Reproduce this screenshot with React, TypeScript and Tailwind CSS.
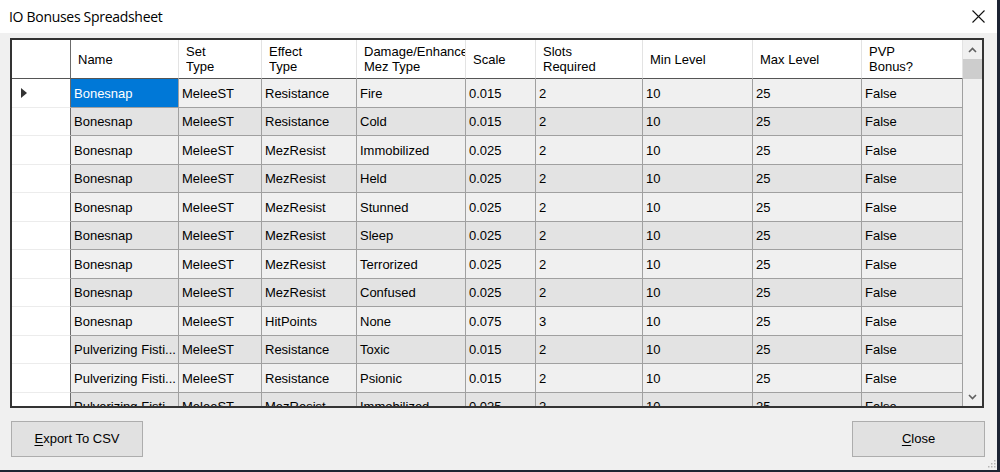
import React from "react"

type Row = [string, string, string, string, string, string, string, string, string]

const rows: Row[] = [
  ["Bonesnap", "MeleeST", "Resistance", "Fire", "0.015", "2", "10", "25", "False"],
  ["Bonesnap", "MeleeST", "Resistance", "Cold", "0.015", "2", "10", "25", "False"],
  ["Bonesnap", "MeleeST", "MezResist", "Immobilized", "0.025", "2", "10", "25", "False"],
  ["Bonesnap", "MeleeST", "MezResist", "Held", "0.025", "2", "10", "25", "False"],
  ["Bonesnap", "MeleeST", "MezResist", "Stunned", "0.025", "2", "10", "25", "False"],
  ["Bonesnap", "MeleeST", "MezResist", "Sleep", "0.025", "2", "10", "25", "False"],
  ["Bonesnap", "MeleeST", "MezResist", "Terrorized", "0.025", "2", "10", "25", "False"],
  ["Bonesnap", "MeleeST", "MezResist", "Confused", "0.025", "2", "10", "25", "False"],
  ["Bonesnap", "MeleeST", "HitPoints", "None", "0.075", "3", "10", "25", "False"],
  ["Pulverizing Fisti...", "MeleeST", "Resistance", "Toxic", "0.015", "2", "10", "25", "False"],
  ["Pulverizing Fisti...", "MeleeST", "Resistance", "Psionic", "0.015", "2", "10", "25", "False"],
  ["Pulverizing Fisti...", "MeleeST", "MezResist", "Immobilized", "0.025", "2", "10", "25", "False"],
]

const headers: string[][] = [
  ["Name"],
  ["Set", "Type"],
  ["Effect", "Type"],
  ["Damage/Enhancement", "Mez Type"],
  ["Scale"],
  ["Slots", "Required"],
  ["Min Level"],
  ["Max Level"],
  ["PVP", "Bonus?"],
]

const cols = "grid grid-cols-[59px_108px_83px_95px_109px_70px_107px_110px_109px_101px]"

function Chevron({ down }: { down?: boolean }) {
  return (
    <svg width="9" height="6" viewBox="0 0 9 6" className={down ? "rotate-180" : ""}>
      <path d="M1 5 L4.5 1.5 L8 5" fill="none" stroke="#606060" strokeWidth="1.6" />
    </svg>
  )
}

export default function App() {
  return (
    <div className="w-[1000px] h-[472px] bg-[#1c2333] overflow-hidden font-['Liberation_Sans',Arial,sans-serif]">
      <div className="w-[997px] h-[470px] bg-[#f0f0f0] flex flex-col relative">
        {/* title bar */}
        <div className="h-[33px] bg-white flex items-center justify-between pl-[9px] pr-[12px]">
          <span className="text-[14px] text-black font-['Open_Sans','Noto_Sans',sans-serif] tracking-[-0.3px]">
            IO Bonuses Spreadsheet
          </span>
          <svg width="13" height="13" viewBox="0 0 13 13">
            <path d="M0.5 0.5 L12.5 12.5 M12.5 0.5 L0.5 12.5" stroke="#111" strokeWidth="1.1" />
          </svg>
        </div>

        {/* grid */}
        <div className="ml-[10px] mt-[5px] w-[974px] h-[370px] border-2 border-[#333] flex bg-white">
          <div className="flex-1 overflow-hidden text-[13px] text-black">
            <div className={`${cols} h-[39px] bg-white`}>
              <div className="border-r border-b border-r-[#6b6b6b] border-b-[#555]" />
              {headers.map((h, i) => (
                <div
                  key={i}
                  className="border-r border-b border-r-[#e3e3e3] border-b-[#555] pl-[7px] flex flex-col justify-center leading-[15px] overflow-hidden whitespace-nowrap"
                >
                  {h.map((line) => (
                    <span key={line} className="block overflow-hidden">
                      {line}
                    </span>
                  ))}
                </div>
              ))}
            </div>
            {rows.map((r, ri) => (
              <div key={ri} className={`${cols} h-[28.5px]`}>
                <div className="border-r border-b border-r-[#6b6b6b] border-b-[#ececec] bg-white flex items-center pl-[9px] pt-[1px]">
                  {ri === 0 && (
                    <svg width="6" height="10" viewBox="0 0 6 10">
                      <path d="M0 0 L6 5 L0 10 Z" fill="#333" />
                    </svg>
                  )}
                </div>
                {r.map((c, ci) => (
                  <div
                    key={ci}
                    className={`border-r border-b border-[#a0a0a0] flex items-center pl-[3px] pt-[1px] whitespace-nowrap overflow-hidden ${
                      ri === 0 && ci === 0
                        ? "bg-[#0078d7] text-white"
                        : ri % 2 === 0
                        ? "bg-[#f0f0f0]"
                        : "bg-[#e3e3e3]"
                    }`}
                  >
                    {c}
                  </div>
                ))}
              </div>
            ))}
          </div>
          {/* scrollbar */}
          <div className="w-[19px] bg-[#f0f0f0] flex flex-col items-center">
            <div className="h-[19px] w-full flex items-center justify-center">
              <Chevron />
            </div>
            <div className="h-[20px] w-full bg-[#cdcdcd]" />
            <div className="flex-1" />
            <div className="h-[19px] w-full flex items-center justify-center">
              <Chevron down />
            </div>
          </div>
        </div>

        {/* buttons */}
        <div className="flex justify-between pl-[11px] pr-[12px] mt-[13px]">
          <button className="w-[132px] h-[36px] bg-[#e1e1e1] border border-[#adadad] text-[13px] text-black">
            <span className="underline underline-offset-2">E</span>xport To CSV
          </button>
          <button className="w-[133px] h-[36px] bg-[#e1e1e1] border border-[#adadad] text-[13px] text-black">
            <span className="underline underline-offset-2">C</span>lose
          </button>
        </div>

        {/* resize grip */}
        <svg width="8" height="8" viewBox="0 0 8 8" className="absolute right-[1px] bottom-[2px]">
          <rect x="6" y="0" width="1.5" height="1.5" fill="#b5b5b5" />
          <rect x="3" y="3" width="1.5" height="1.5" fill="#b5b5b5" />
          <rect x="6" y="3" width="1.5" height="1.5" fill="#b5b5b5" />
          <rect x="0" y="6" width="1.5" height="1.5" fill="#b5b5b5" />
          <rect x="3" y="6" width="1.5" height="1.5" fill="#b5b5b5" />
          <rect x="6" y="6" width="1.5" height="1.5" fill="#b5b5b5" />
        </svg>
      </div>
    </div>
  )
}
